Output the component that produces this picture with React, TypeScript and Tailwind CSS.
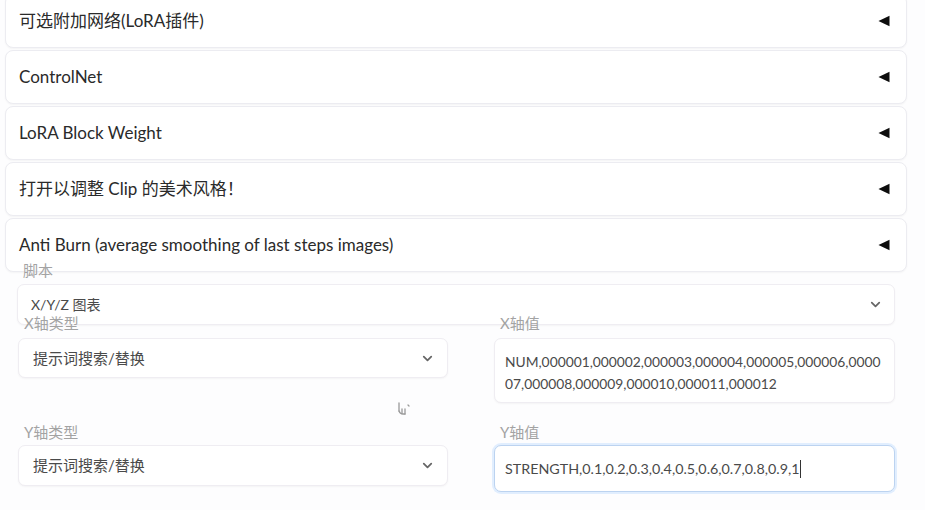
import React from "react";

const FONT = { fontFamily: 'Lato, "Noto Sans CJK SC", sans-serif' };

function Chevron() {
  return (
    <svg width="15" height="15" viewBox="0 0 24 24" fill="none" stroke="#666" strokeWidth="2.8" strokeLinecap="round" strokeLinejoin="round">
      <path d="M6 9l6 6 6-6" />
    </svg>
  );
}

function Accordion({ title }: { title: string }) {
  return (
    <div className="flex h-[54px] items-center justify-between rounded-[8px] border border-[#ececf1] bg-white pl-[13px] pr-[16px] shadow-[0_1px_2px_rgba(0,0,0,0.04)]">
      <span className="text-[17px] text-[#2a2a2a]">{title}</span>
      <svg width="12" height="12" viewBox="0 0 10 10">
        <path d="M9.6 0.6 L0.4 5 L9.6 9.4 Z" fill="#0d0d0d" />
      </svg>
    </div>
  );
}

function Label({ children }: { children: React.ReactNode }) {
  return <div className="relative z-10 h-[14px] pl-[6px] text-[15px] leading-[14px] text-[#a3a3a3]">{children}</div>;
}

function Select({ value, h = 40 }: { value: string; h?: number }) {
  return (
    <div
      className={`flex items-center justify-between rounded-[7px] border border-[#efedf2] bg-white pl-[14px] pr-[12px] shadow-[0_1px_2px_rgba(0,0,0,0.04)] ${h === 41 ? "h-[41px]" : "h-[40px]"}`}
    >
      <span className="text-[15px] text-[#4a4a4a]">{value}</span>
      <Chevron />
    </div>
  );
}

export default function App() {
  return (
    <div className="relative h-[510px] w-[925px] overflow-hidden bg-[#fdfdfe]" style={FONT}>
      <div className="mt-[-6px] flex w-[907px] flex-col gap-[2px] pl-[5px]">
        <Accordion title="可选附加网络(LoRA插件)" />
        <Accordion title="ControlNet" />
        <Accordion title="LoRA Block Weight" />
        <Accordion title="打开以调整 Clip 的美术风格！" />
        <Accordion title="Anti Burn (average smoothing of last steps images)" />
      </div>

      <div className="mt-[-9px] w-[895px] pl-[17px]">
        <Label>脚本</Label>
        <div className="mt-[7px]">
          <div className="flex h-[41px] items-center justify-between rounded-[7px] border border-[#efedf2] bg-white pl-[13px] pr-[11px] shadow-[0_1px_2px_rgba(0,0,0,0.04)]">
            <span className="text-[14px] text-[#4a4a4a]">X/Y/Z 图表</span>
            <Chevron />
          </div>
        </div>

        <div className="mt-[-9px] grid grid-cols-[430px_401px] gap-x-[46px] pl-[1px]">
          <div>
            <Label>X轴类型</Label>
            <div className="mt-[8px]">
              <Select value="提示词搜索/替换" />
            </div>
          </div>
          <div>
            <Label>X轴值</Label>
            <div className="mt-[8px] h-[65px] whitespace-nowrap rounded-[7px] border border-[#efedf2] bg-white px-[10px] pt-[12px] text-[13.8px] leading-[22px] text-[#4a4a4a] shadow-[0_1px_2px_rgba(0,0,0,0.04)]">
              <div>NUM,000001,000002,000003,000004,000005,000006,0000</div>
              <div>07,000008,000009,000010,000011,000012</div>
            </div>
          </div>
          <div className="mt-[22px]">
            <Label>Y轴类型</Label>
            <div className="mt-[6px]">
              <Select value="提示词搜索/替换" h={41} />
            </div>
          </div>
          <div className="mt-[22px]">
            <Label>Y轴值</Label>
            <div className="mt-[6px] flex h-[47px] items-center whitespace-nowrap rounded-[7px] border border-[#bcd3f0] bg-white px-[10px] text-[14.3px] text-[#4a4a4a] shadow-[0_0_0_2px_rgba(191,219,254,0.45)]">
              <span>STRENGTH,0.1,0.2,0.3,0.4,0.5,0.6,0.7,0.8,0.9,1</span>
              <span className="ml-[1px] inline-block h-[18px] w-[1px] bg-[#333]" />
            </div>
          </div>
        </div>
      </div>

      <svg className="absolute left-[396px] top-[401px]" width="16" height="16" viewBox="0 0 16 16" fill="none" stroke="#9a9a9a" strokeWidth="1.3" strokeLinecap="round">
        <path d="M3 2 L3 10" />
        <path d="M3 10 Q4 13 7 13 L9 13" />
        <path d="M6 8 L6 12" />
        <path d="M9 8 L9 13" />
        <path d="M12 4 L13 5" />
      </svg>
    </div>
  );
}
